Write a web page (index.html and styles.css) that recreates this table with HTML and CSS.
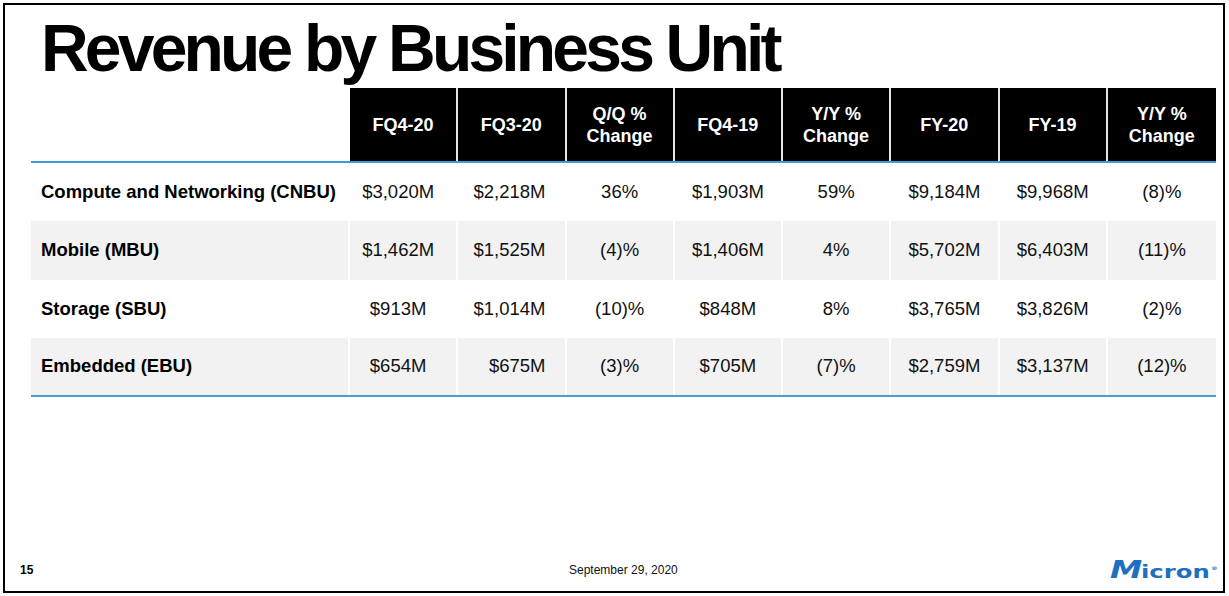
FILE: index.html
```html
<!DOCTYPE html>
<html lang="en">
<head>
<meta charset="utf-8">
<title>Revenue by Business Unit</title>
<link rel="stylesheet" href="styles.css">
</head>
<body>
<div class="slide">
  <h1 class="title">Revenue by Business Unit</h1>
  <div class="table">
    <div class="row head">
      <div class="cell blank"></div>
      <div class="cell hc">FQ4-20</div>
      <div class="cell hc">FQ3-20</div>
      <div class="cell hc">Q/Q %<br>Change</div>
      <div class="cell hc">FQ4-19</div>
      <div class="cell hc">Y/Y %<br>Change</div>
      <div class="cell hc">FY-20</div>
      <div class="cell hc">FY-19</div>
      <div class="cell hc">Y/Y %<br>Change</div>
    </div>
    <div class="row body">
      <div class="cell label">Compute and Networking (CNBU)</div>
      <div class="cell num c1">$3,020M</div>
      <div class="cell num c2">$2,218M</div>
      <div class="cell num">36%</div>
      <div class="cell num">$1,903M</div>
      <div class="cell num">59%</div>
      <div class="cell num">$9,184M</div>
      <div class="cell num">$9,968M</div>
      <div class="cell num">(8)%</div>
    </div>
    <div class="row body alt">
      <div class="cell label">Mobile (MBU)</div>
      <div class="cell num c1">$1,462M</div>
      <div class="cell num c2">$1,525M</div>
      <div class="cell num">(4)%</div>
      <div class="cell num">$1,406M</div>
      <div class="cell num">4%</div>
      <div class="cell num">$5,702M</div>
      <div class="cell num">$6,403M</div>
      <div class="cell num">(11)%</div>
    </div>
    <div class="row body">
      <div class="cell label">Storage (SBU)</div>
      <div class="cell num c1">$913M</div>
      <div class="cell num c2">$1,014M</div>
      <div class="cell num">(10)%</div>
      <div class="cell num">$848M</div>
      <div class="cell num">8%</div>
      <div class="cell num">$3,765M</div>
      <div class="cell num">$3,826M</div>
      <div class="cell num">(2)%</div>
    </div>
    <div class="row body alt last">
      <div class="cell label">Embedded (EBU)</div>
      <div class="cell num c1">$654M</div>
      <div class="cell num c2">$675M</div>
      <div class="cell num">(3)%</div>
      <div class="cell num">$705M</div>
      <div class="cell num">(7)%</div>
      <div class="cell num">$2,759M</div>
      <div class="cell num">$3,137M</div>
      <div class="cell num">(12)%</div>
    </div>
  </div>
  <div class="footer">
    <div class="pnum">15</div>
    <div class="date">September 29, 2020</div>
    <div class="logo"><span class="logo-m">M</span><span class="logo-rest">icron</span><span class="logo-reg">®</span></div>
  </div>
</div>
</body>
</html>
```
FILE: styles.css
```css
html, body {
  margin: 0;
  padding: 0;
  background: #ffffff;
}

body {
  font-family: "Liberation Sans", Arial, sans-serif;
  color: #000;
}

.slide {
  box-sizing: border-box;
  margin: 3px;
  width: 1222px;
  height: 590px;
  border: 2px solid #000;
  display: flex;
  flex-direction: column;
  background: #fff;
}

.title {
  margin: 8px 0 0 36px;
  font-size: 66px;
  line-height: 70px;
  font-weight: bold;
  letter-spacing: -3.8px;
  color: #000;
}

.table {
  margin: 5px 0 0 26px;
  width: 1185px;
}

.row {
  display: grid;
  grid-template-columns: 319px repeat(8, 108.25px);
}

.cell {
  box-sizing: border-box;
  display: flex;
  align-items: center;
  border-right: 2px solid #fff;
}

.cell:first-child,
.cell:last-child {
  border-right: none;
}

.head {
  height: 75px;
  border-bottom: 2px solid #3f9bd6;
  box-sizing: border-box;
}

.hc {
  background: #000;
  color: #fff;
  font-weight: bold;
  font-size: 18px;
  line-height: 22px;
  justify-content: center;
  text-align: center;
  border-right-color: #e4e4e4;
}

.body {
  height: 58.25px;
  font-size: 18.5px;
  color: #111;
}

.alt .cell {
  background: #f2f2f2;
}

.alt .cell:first-child {
  border-right: 2px solid #fff;
}

.alt .label {
  width: 319px;
}

.last {
  height: 59.25px;
  border-bottom: 2px solid #4d9ccb;
  box-sizing: border-box;
}

.label {
  font-weight: bold;
  padding-left: 10px;
  color: #000;
}

.num {
  justify-content: center;
}

.c1 {
  padding-right: 10px;
}

.c2 {
  justify-content: flex-end;
  padding-right: 19px;
}

.footer {
  margin-top: auto;
  margin-bottom: 6px;
  height: 30px;
  display: flex;
  align-items: center;
  padding: 0 5px 0 15px;
  font-size: 12px;
  color: #111;
}

.pnum {
  width: 549px;
  font-weight: bold;
  color: #000;
}

.logo {
  margin-left: auto;
  font-family: "DejaVu Sans", sans-serif;
  font-weight: bold;
  color: #1d6fc2;
  white-space: nowrap;
  transform: scaleX(1.35);
  transform-origin: right center;
  display: flex;
  align-items: baseline;
}

.logo-m {
  font-size: 24px;
  font-style: italic;
  letter-spacing: -1px;
}

.logo-rest {
  font-size: 18px;
}

.logo-reg {
  font-size: 5px;
  align-self: flex-start;
  margin-top: 9px;
  margin-left: 1px;
}
```
